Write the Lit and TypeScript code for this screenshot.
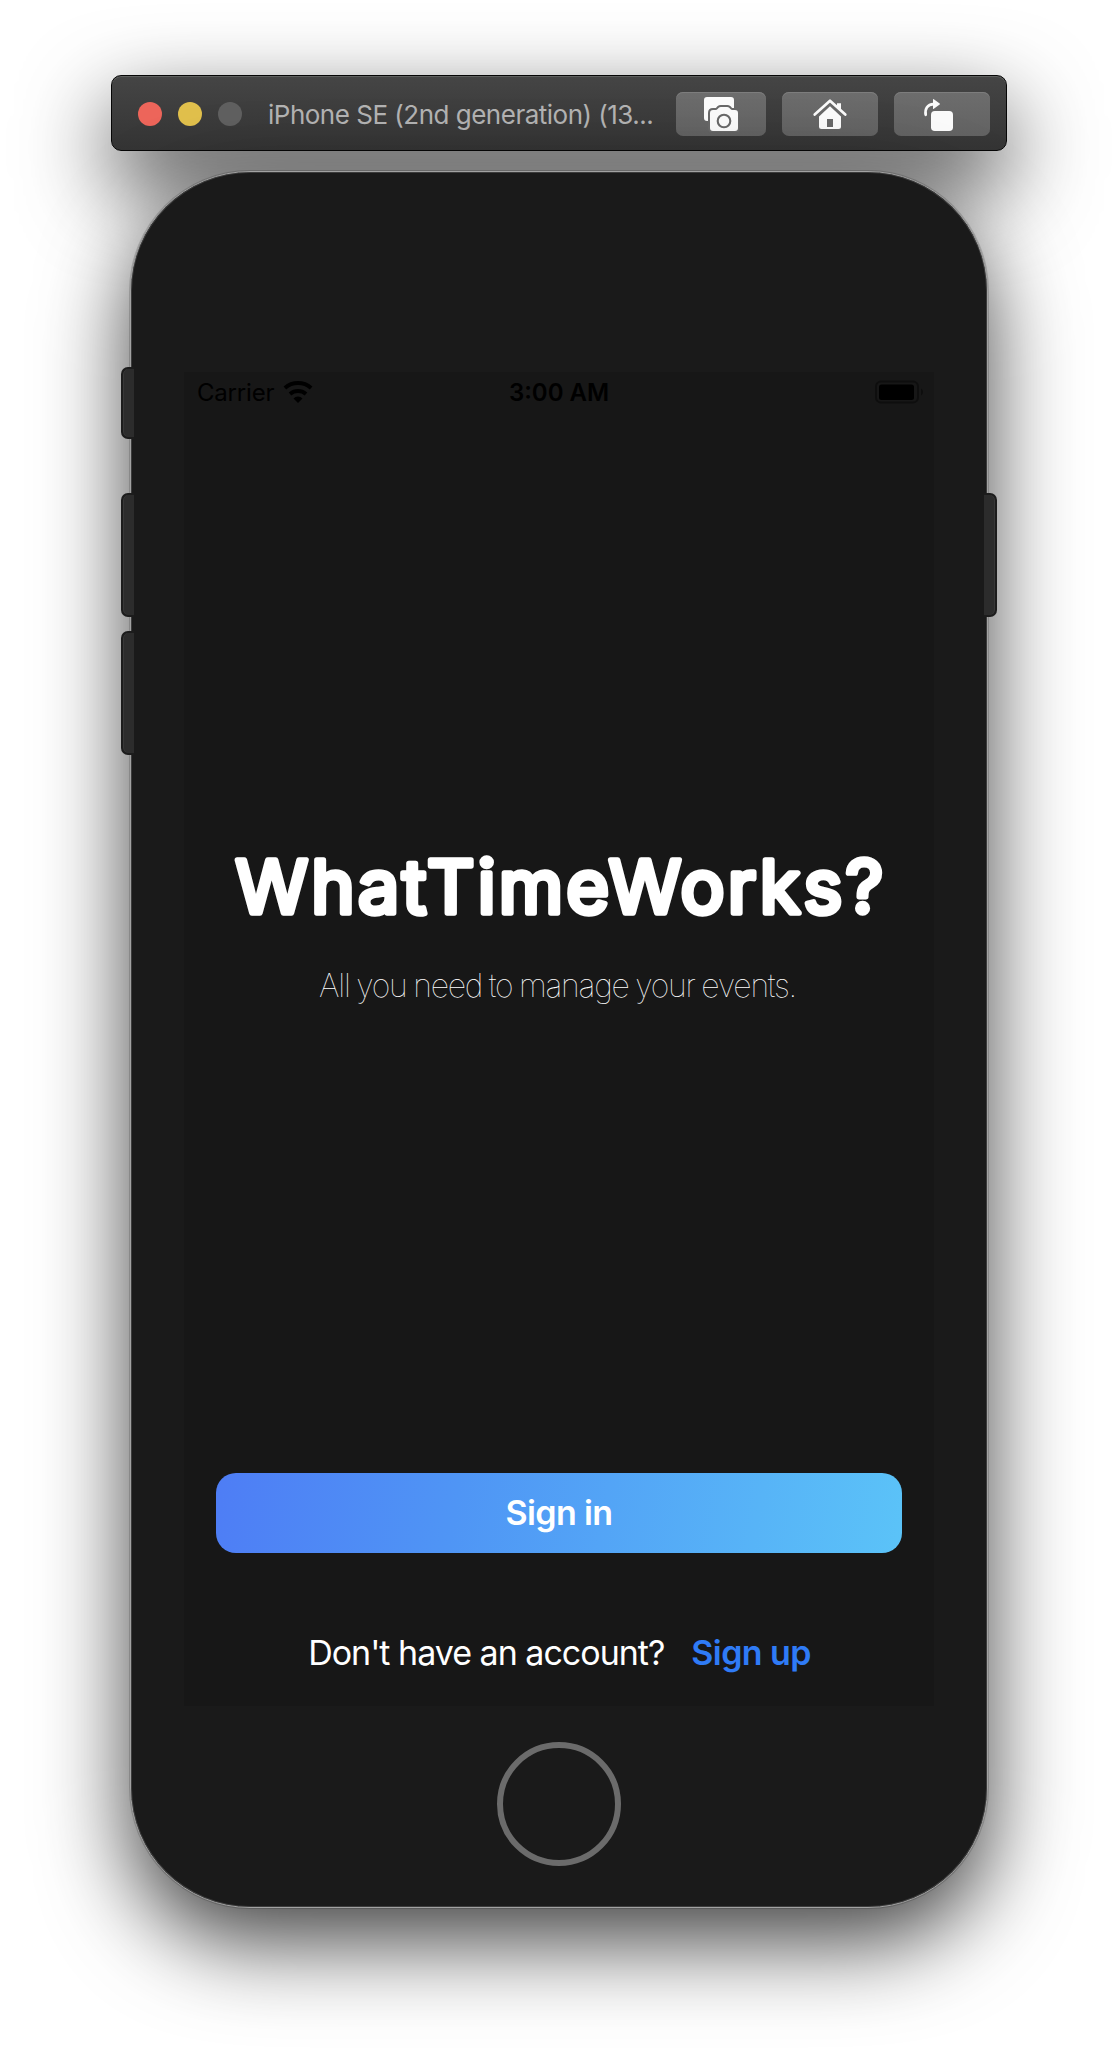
import { LitElement, html, css } from "lit";
import { customElement } from "lit/decorators.js";

@customElement("sim-toolbar")
class SimToolbar extends LitElement {
  static styles = css`
    :host {
      display: flex;
      align-items: center;
      box-sizing: border-box;
      width: 896px;
      height: 76px;
      padding: 2px 16px 0 26px;
      border: 1px solid #060606;
      border-radius: 10px;
      background: linear-gradient(#454545, #343434);
      box-shadow: inset 0 1px 0 #5f615f, 0 34px 88px rgba(0, 0, 0, 0.74);
      font-family: Inter, "Liberation Sans", sans-serif;
    }
    .lights {
      display: flex;
      gap: 16px;
    }
    .light {
      width: 24px;
      height: 24px;
      border-radius: 50%;
    }
    .close {
      background: #ed655a;
    }
    .minimise {
      background: #e1c04c;
    }
    .zoom {
      background: #606060;
    }
    .title {
      flex: 1;
      padding: 1px 0 0 26px;
      font-size: 26px;
      line-height: 32px;
      letter-spacing: -0.5px;
      white-space: nowrap;
      color: #b3b3b3;
    }
    .actions {
      display: flex;
      gap: 16px;
    }
    .action {
      display: flex;
      align-items: center;
      justify-content: center;
      width: 96px;
      height: 44px;
      padding: 0;
      border: 0;
      border-radius: 7px;
      background: linear-gradient(#6d6d6d, #626262);
      box-shadow: inset 0 1px 0 #7d7d7d;
    }
    .action.narrow {
      width: 90px;
    }
    .icon {
      display: block;
      fill: #fbfbfb;
    }
    .knock {
      stroke: #696969;
      stroke-width: 4;
      paint-order: stroke;
      stroke-linejoin: round;
    }
    .ring {
      fill: none;
      stroke: #686868;
      stroke-width: 2.1;
    }
    .door {
      fill: #686868;
    }
    .line {
      fill: none;
      stroke: #fbfbfb;
      stroke-width: 2.7;
      stroke-linecap: round;
      stroke-linejoin: round;
    }
  `;

  render() {
    return html`
      <div class="lights">
        <span class="light close"></span>
        <span class="light minimise"></span>
        <span class="light zoom"></span>
      </div>
      <div class="title">iPhone SE (2nd generation) (13...</div>
      <div class="actions">
        <button class="action narrow" aria-label="Screenshot">
          <svg class="icon" width="36" height="36" viewBox="0 0 36 36">
            <path d="M4 1H28Q31 1 31 4V20H9V25H4Q1 25 1 22V4Q1 1 4 1Z" />
            <path class="knock" d="M10 14H12.6Q13.8 14 14.6 13L15.8 11.7Q16.6 11 17.8 11H24.2Q25.4 11 26.2 11.7L27.4 13Q28.2 14 29.4 14H32Q35 14 35 17V32Q35 35 32 35H10Q7 35 7 32V17Q7 14 10 14Z" />
            <circle class="ring" cx="21" cy="25" r="6.3" />
          </svg>
        </button>
        <button class="action" aria-label="Home">
          <svg class="icon" width="36" height="36" viewBox="0 0 36 36">
            <path d="M25 7.2H29V15L25 11Z" />
            <path d="M18 10.2L29 20.4V30.5Q29 33 26.5 33H9.5Q7 33 7 30.5V20.4Z" />
            <path class="line" d="M2.7 18.6L18 4.7L33.3 18.6" />
            <rect class="door" x="15" y="23" width="6" height="8" />
          </svg>
        </button>
        <button class="action" aria-label="Rotate">
          <svg class="icon" width="40" height="36" viewBox="0 0 40 36">
            <rect x="9" y="15" width="22" height="20" rx="3.8" />
            <path class="line" d="M3.7 18.8C2.7 12.5 5.5 8.6 11.5 8.2" />
            <path d="M11 3.6Q11 2.7 11.8 3.3L17.7 7.5Q18.3 8 17.7 8.5L11.8 12.8Q11 13.3 11 12.4Z" />
          </svg>
        </button>
      </div>
    `;
  }
}

@customElement("status-bar")
class StatusBar extends LitElement {
  static styles = css`
    :host {
      display: grid;
      grid-template-columns: 1fr auto 1fr;
      align-items: center;
      height: 40px;
      padding: 0 10px 0 13px;
      font: 400 24px/38px Inter, "Liberation Sans", sans-serif;
      color: #000;
    }
    .network {
      display: flex;
      align-items: center;
      gap: 9px;
      letter-spacing: -0.2px;
    }
    .label {
      padding-top: 2px;
    }
    .time {
      padding: 2px 3px 0 0;
      font-weight: 600;
    }
    .wifi {
      fill: none;
      stroke: #000;
      stroke-width: 4;
    }
    .wedge {
      fill: #000;
      stroke: none;
    }
    .battery {
      justify-self: end;
    }
    .case {
      fill: none;
      stroke: #0e0e0e;
      stroke-width: 2;
    }
    .nub {
      fill: #0e0e0e;
    }
  `;

  render() {
    return html`
      <div class="network">
        <span class="label">Carrier</span>
        <svg class="wifi" width="30" height="22" viewBox="0 0 30 22">
          <path d="M1.9 7A20 20 0 0 1 28.1 7" />
          <path d="M7 13A12.4 12.4 0 0 1 23 13" />
          <path class="wedge" d="M15 22L10.5 17.4A6.4 6.4 0 0 1 19.5 17.4Z" />
        </svg>
      </div>
      <span class="time">3:00 AM</span>
      <svg class="battery" width="49" height="24" viewBox="0 0 49 24">
        <rect class="case" x="1" y="1.5" width="42" height="21" rx="5" />
        <rect x="4" y="4.5" width="35" height="15.5" rx="2.5" />
        <path class="nub" d="M46 8.5Q48 9.5 48 12T46 15.5Z" />
      </svg>
    `;
  }
}

@customElement("welcome-screen")
class WelcomeScreen extends LitElement {
  static styles = css`
    :host {
      display: flex;
      flex-direction: column;
      box-sizing: border-box;
      width: 750px;
      height: 1334px;
      padding-bottom: 32px;
      background: #171717;
      font-family: Inter, "Liberation Sans", sans-serif;
      color: #fff;
    }
    .heading {
      display: block;
      margin-top: 428px;
      width: 750px;
      height: 100px;
    }
    .name {
      font-size: 73.5px;
      font-weight: 400;
      letter-spacing: 3.2px;
      fill: #fff;
      stroke: #fff;
      stroke-width: 5.5px;
      stroke-linejoin: round;
      stroke-linecap: round;
    }
    .tagline {
      margin: 27px 0 0;
      padding-right: 3px;
      font-size: 32px;
      font-weight: 100;
      line-height: 38px;
      letter-spacing: -1.24px;
      word-spacing: -1.1px;
      text-align: center;
    }
    .sign-in {
      margin: auto 32px 0;
      height: 80px;
      padding: 0 0 1px;
      border: 0;
      border-radius: 20px;
      background: linear-gradient(100deg, #4e7df5, #4f95f5 35%, #5bc3f8);
      font: 600 34px/79px Inter, "Liberation Sans", sans-serif;
      letter-spacing: -0.65px;
      color: #fff;
    }
    .footer {
      display: flex;
      justify-content: center;
      gap: 27px;
      margin-top: 79px;
      padding-left: 1px;
      font-size: 34px;
      line-height: 42px;
      letter-spacing: -1px;
      white-space: nowrap;
    }
    .sign-up {
      font-weight: 600;
      letter-spacing: -0.6px;
      color: #2f7bf6;
    }
  `;

  render() {
    return html`
      <status-bar></status-bar>
      <svg class="heading" viewBox="0 0 750 100">
        <text class="name" x="51.6" y="73">WhatTimeWorks?</text>
      </svg>
      <p class="tagline">All you need to manage your events.</p>
      <button class="sign-in">Sign in</button>
      <div class="footer">
        <span>Don't have an account?</span>
        <span class="sign-up">Sign up</span>
      </div>
    `;
  }
}

@customElement("app-root")
class AppRoot extends LitElement {
  static styles = css`
    :host {
      display: flex;
      flex-direction: column;
      align-items: center;
      box-sizing: border-box;
      width: 1118px;
      height: 2056px;
      padding-top: 75px;
      overflow: hidden;
      background: #fff;
    }
    .phone {
      position: relative;
      display: flex;
      flex-direction: column;
      align-items: center;
      box-sizing: border-box;
      width: 858px;
      height: 1737px;
      margin-top: 20px;
      padding-top: 200px;
      border: 1px solid #a2a2a2;
      border-radius: 120px;
      background: #1a1a1a;
      box-shadow: inset 0 0 0 1px #3c3c3c, 0 0 0 1px rgba(0, 0, 0, 0.16), 0 34px 88px rgba(0, 0, 0, 0.74);
    }
    .home {
      box-sizing: border-box;
      width: 124px;
      height: 124px;
      margin-top: 36px;
      border: 6px solid #6b6b6b;
      border-radius: 50%;
    }
    .key {
      position: absolute;
      box-sizing: border-box;
      left: -10px;
      width: 13px;
      height: 124px;
      border: 2px solid #1c1c1c;
      border-right: 0;
      border-radius: 7px 0 0 7px;
      background: #2c2c2c;
      box-shadow: inset 1px 0 0 #383838;
    }
    .mute {
      top: 195px;
      height: 72px;
    }
    .volume-up {
      top: 321px;
    }
    .volume-down {
      top: 459px;
    }
    .power {
      top: 321px;
      left: auto;
      right: -10px;
      transform: scaleX(-1);
    }
  `;

  render() {
    return html`
      <sim-toolbar></sim-toolbar>
      <div class="phone">
        <welcome-screen></welcome-screen>
        <div class="home"></div>
        <span class="key mute"></span>
        <span class="key volume-up"></span>
        <span class="key volume-down"></span>
        <span class="key power"></span>
      </div>
    `;
  }
}
